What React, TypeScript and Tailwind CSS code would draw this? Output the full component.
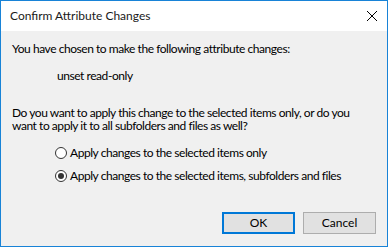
export default function App() {
  return (
    <div
      className="w-[388px] h-[247px] border border-[#1883d7] flex flex-col text-[12px] text-black whitespace-nowrap"
      style={{ fontFamily: 'Lato, "Noto Sans", sans-serif' }}
    >
      <div className="h-[30px] bg-white flex items-center justify-between pl-[9px] pr-[9px] shrink-0">
        <span className="text-[12px] leading-[16px] text-[#1a1a1a]">Confirm Attribute Changes</span>
        <svg width="12" height="12" viewBox="0 0 12 12">
          <path d="M1 1 L11 11 M11 1 L1 11" stroke="#000" strokeWidth="1" />
        </svg>
      </div>
      <div className="flex-1 bg-[#f0f0f0] flex flex-col px-[11px] tracking-[-0.45px]">
        <p className="mt-[10px] leading-[16px]">You have chosen to make the following attribute changes:</p>
        <p className="mt-[11px] ml-[45px] leading-[16px]">unset read-only</p>
        <div className="mt-[22px] flex flex-col">
          <p className="h-[13px] leading-[13px]">Do you want to apply this change to the selected items only, or do you</p>
          <p className="h-[13px] leading-[13px]">want to apply it to all subfolders and files as well?</p>
        </div>
        <div className="mt-[13px] ml-[43px] flex flex-col gap-[7px]">
          <label className="flex items-center gap-[3px] leading-[16px]">
            <span className="w-[12px] h-[12px] rounded-full border border-[#333] bg-white" />
            Apply changes to the selected items only
          </label>
          <label className="flex items-center gap-[3px] leading-[16px]">
            <span className="w-[12px] h-[12px] rounded-full border border-[#333] bg-white flex items-center justify-center">
              <span className="w-[6px] h-[6px] rounded-full bg-[#333]" />
            </span>
            Apply changes to the selected items, subfolders and files
          </label>
        </div>
        <div className="mt-auto mb-[12px] flex justify-end gap-[8px] tracking-normal">
          <button className="w-[73px] h-[22px] bg-[#e1e1e1] border-2 border-[#0078d7] leading-none">OK</button>
          <button className="w-[73px] h-[22px] bg-[#e1e1e1] border border-[#adadad] leading-none">Cancel</button>
        </div>
      </div>
    </div>
  )
}
